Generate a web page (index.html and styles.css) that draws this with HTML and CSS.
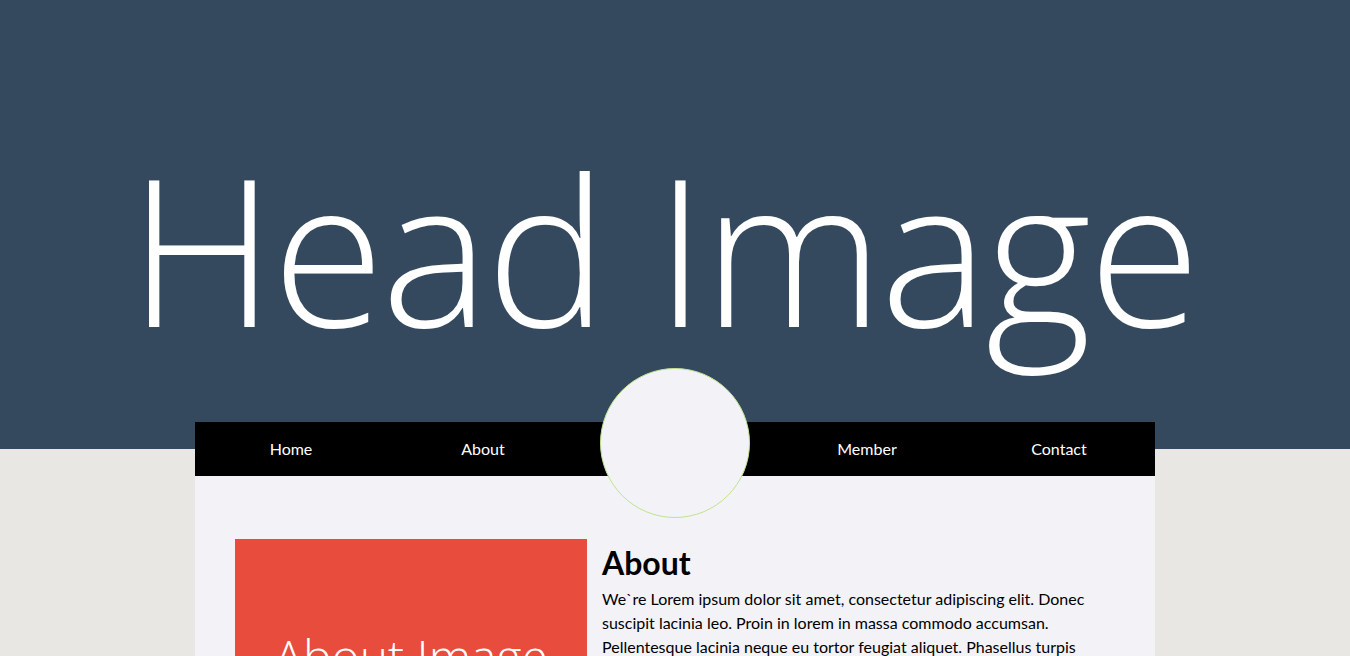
FILE: index.html
```html
<!DOCTYPE html>
<html lang="en">
<head>
<meta charset="utf-8">
<title>Head Image</title>
<link rel="stylesheet" href="styles.css">
</head>
<body>
<header class="hero">
  <h1 class="hero-title">Head Image</h1>
</header>
<main class="wrap">
  <nav class="nav">
    <a class="nav-item" href="#">Home</a>
    <a class="nav-item" href="#">About</a>
    <div class="nav-item nav-logo"><span class="logo-circle"></span></div>
    <a class="nav-item" href="#">Member</a>
    <a class="nav-item" href="#">Contact</a>
  </nav>
  <section class="about">
    <div class="about-image"><span class="about-image-text">About Image</span></div>
    <div class="about-text">
      <h2 class="about-title">About</h2>
      <p class="about-copy">We`re Lorem ipsum dolor sit amet, consectetur adipiscing elit. Donec suscipit lacinia leo. Proin in lorem in massa commodo accumsan. Pellentesque lacinia neque eu tortor feugiat aliquet. Phasellus turpis lectus, porta a lacus vel, fermentum sollicitudin ligula. Aliquam vel rutrum dolor. Curabitur in nunc id nulla luctus dictum.</p>
    </div>
  </section>
</main>
</body>
</html>
```
FILE: styles.css
```css
* { box-sizing: border-box; }
html, body { margin: 0; padding: 0; }
body {
  background: #e8e7e3;
  font-family: "Lato", "Liberation Sans", sans-serif;
  color: #000;
}
.hero {
  height: 449px;
  background: #34495e;
  padding: 109px 24px 0 0;
  text-align: center;
}
.hero-title {
  margin: 0;
  font-family: "Open Sans", "Liberation Sans", sans-serif;
  font-weight: 300;
  font-size: 204px;
  letter-spacing: -3px;
  line-height: normal;
  color: #fff;
  white-space: nowrap;
}
.wrap {
  position: relative;
  width: 960px;
  margin: -27px auto 0;
  background: #f3f2f7;
  min-height: 400px;
}
.nav {
  display: grid;
  grid-template-columns: repeat(5, 1fr);
  height: 54px;
  background: #000;
}
.nav-item {
  display: flex;
  align-items: center;
  justify-content: center;
  padding-bottom: 2px;
  color: #fff;
  text-decoration: none;
  font-size: 16px;
}
.nav-logo { position: relative; padding: 0; }
.logo-circle {
  position: absolute;
  top: -54px;
  left: 21px;
  width: 150px;
  height: 150px;
  border-radius: 50%;
  background: #f3f2f7;
  border: 1px solid #bfe38f;
}
.about {
  display: grid;
  grid-template-columns: 352px 486px;
  column-gap: 15px;
  padding: 63px 40px 40px;
}
.about-image {
  background: #e74c3c;
  height: 260px;
  padding-top: 89px;
  text-align: center;
}
.about-image-text {
  font-family: "Open Sans", "Liberation Sans", sans-serif;
  font-weight: 300;
  font-size: 48px;
  line-height: 1.2;
  color: #fff;
}
.about-title {
  margin: 2px 0 0;
  font-size: 32px;
  font-weight: 700;
  line-height: 44px;
}
.about-copy {
  margin: 2px 0 0;
  font-size: 16px;
  line-height: 24px;
}
```
